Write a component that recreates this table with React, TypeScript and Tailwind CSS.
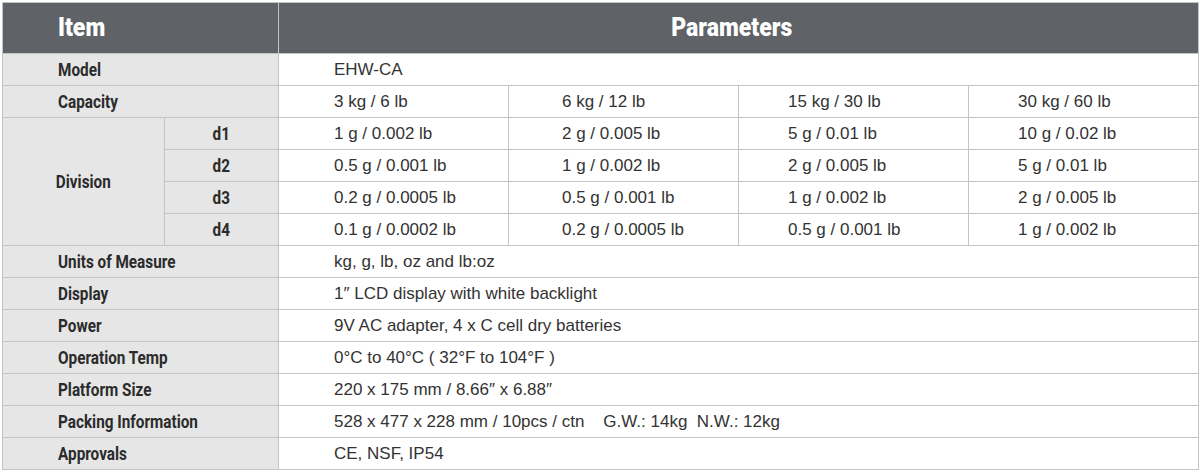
import React from "react";

const labelFont = "font-['Roboto','Liberation_Sans',sans-serif]";

const Label = ({ children, colSpan, rowSpan, center }: { children: React.ReactNode; colSpan?: number; rowSpan?: number; center?: boolean }) => (
  <td
    colSpan={colSpan}
    rowSpan={rowSpan}
    className={`border border-[#c4c4c4] bg-[#e6e6e6] text-[#2b2b2b] font-bold text-[18px] whitespace-nowrap ${labelFont} ${center ? "text-center" : "pl-[55px] text-left"}`}
  >
    <span className={`inline-block scale-x-[0.85] ${center ? "origin-center" : "origin-left"}`}>{children}</span>
  </td>
);

const pads = ["pl-[55px]", "pl-[53px]", "pl-[49px]", "pl-[49px]"];

const Val = ({ children, colSpan, i = 0 }: { children: React.ReactNode; colSpan?: number; i?: number }) => (
  <td colSpan={colSpan} className={`border border-[#c4c4c4] bg-white text-[#333333] text-[17px] font-['Liberation_Sans',Arial,sans-serif] whitespace-pre ${pads[i]}`}>
    {children}
  </td>
);

const divisions: [string, string[]][] = [
  ["d1", ["1 g / 0.002 lb", "2 g / 0.005 lb", "5 g / 0.01 lb", "10 g / 0.02 lb"]],
  ["d2", ["0.5 g / 0.001 lb", "1 g / 0.002 lb", "2 g / 0.005 lb", "5 g / 0.01 lb"]],
  ["d3", ["0.2 g / 0.0005 lb", "0.5 g / 0.001 lb", "1 g / 0.002 lb", "2 g / 0.005 lb"]],
  ["d4", ["0.1 g / 0.0002 lb", "0.2 g / 0.0005 lb", "0.5 g / 0.001 lb", "1 g / 0.002 lb"]],
];

const singles: [string, string][] = [
  ["Units of Measure", "kg, g, lb, oz and lb:oz"],
  ["Display", "1\u2033 LCD display with white backlight"],
  ["Power", "9V AC adapter, 4 x C cell dry batteries"],
  ["Operation Temp", "0°C to 40°C ( 32°F to 104°F )"],
  ["Platform Size", "220 x 175 mm / 8.66\u2033 x 6.88\u2033"],
  ["Packing Information", "528 x 477 x 228 mm / 10pcs / ctn    G.W.: 14kg  N.W.: 12kg"],
  ["Approvals", "CE, NSF, IP54"],
];

export default function App() {
  return (
    <div className="w-[1200px] h-[474px] bg-white p-[2px]">
      <table className="w-[1196px] table-fixed border-collapse">
        <colgroup>
          <col className="w-[162px]" />
          <col className="w-[114px]" />
          <col className="w-[230px]" />
          <col className="w-[230px]" />
          <col className="w-[230px]" />
          <col className="w-[230px]" />
        </colgroup>
        <tbody>
          <tr className="h-[51px]">
            <th colSpan={2} className={`border border-[#c4c4c4] bg-[#5f6266] text-white text-left pl-[55px] text-[25px] font-black ${labelFont}`}>
              <span className="inline-block scale-x-[0.92] origin-left">Item</span>
            </th>
            <th colSpan={4} className={`border border-[#c4c4c4] bg-[#5f6266] text-white text-center pr-[14px] text-[25px] font-black ${labelFont}`}>
              <span className="inline-block scale-x-[0.92] origin-center">Parameters</span>
            </th>
          </tr>
          <tr className="h-[32px]">
            <Label colSpan={2}>Model</Label>
            <Val colSpan={4}>EHW-CA</Val>
          </tr>
          <tr className="h-[32px]">
            <Label colSpan={2}>Capacity</Label>
            {["3 kg / 6 lb", "6 kg / 12 lb", "15 kg / 30 lb", "30 kg / 60 lb"].map((v, i) => (
              <Val key={v} i={i}>{v}</Val>
            ))}
          </tr>
          {divisions.map(([d, vals], r) => (
            <tr key={d} className="h-[32px]">
              {r === 0 && (
                <Label rowSpan={4} center>
                  Division
                </Label>
              )}
              <Label center>{d}</Label>
              {vals.map((v, i) => (
                <Val key={i} i={i}>{v}</Val>
              ))}
            </tr>
          ))}
          {singles.map(([l, v]) => (
            <tr key={l} className="h-[32px]">
              <Label colSpan={2}>{l}</Label>
              <Val colSpan={4}>{v}</Val>
            </tr>
          ))}
        </tbody>
      </table>
    </div>
  );
}
